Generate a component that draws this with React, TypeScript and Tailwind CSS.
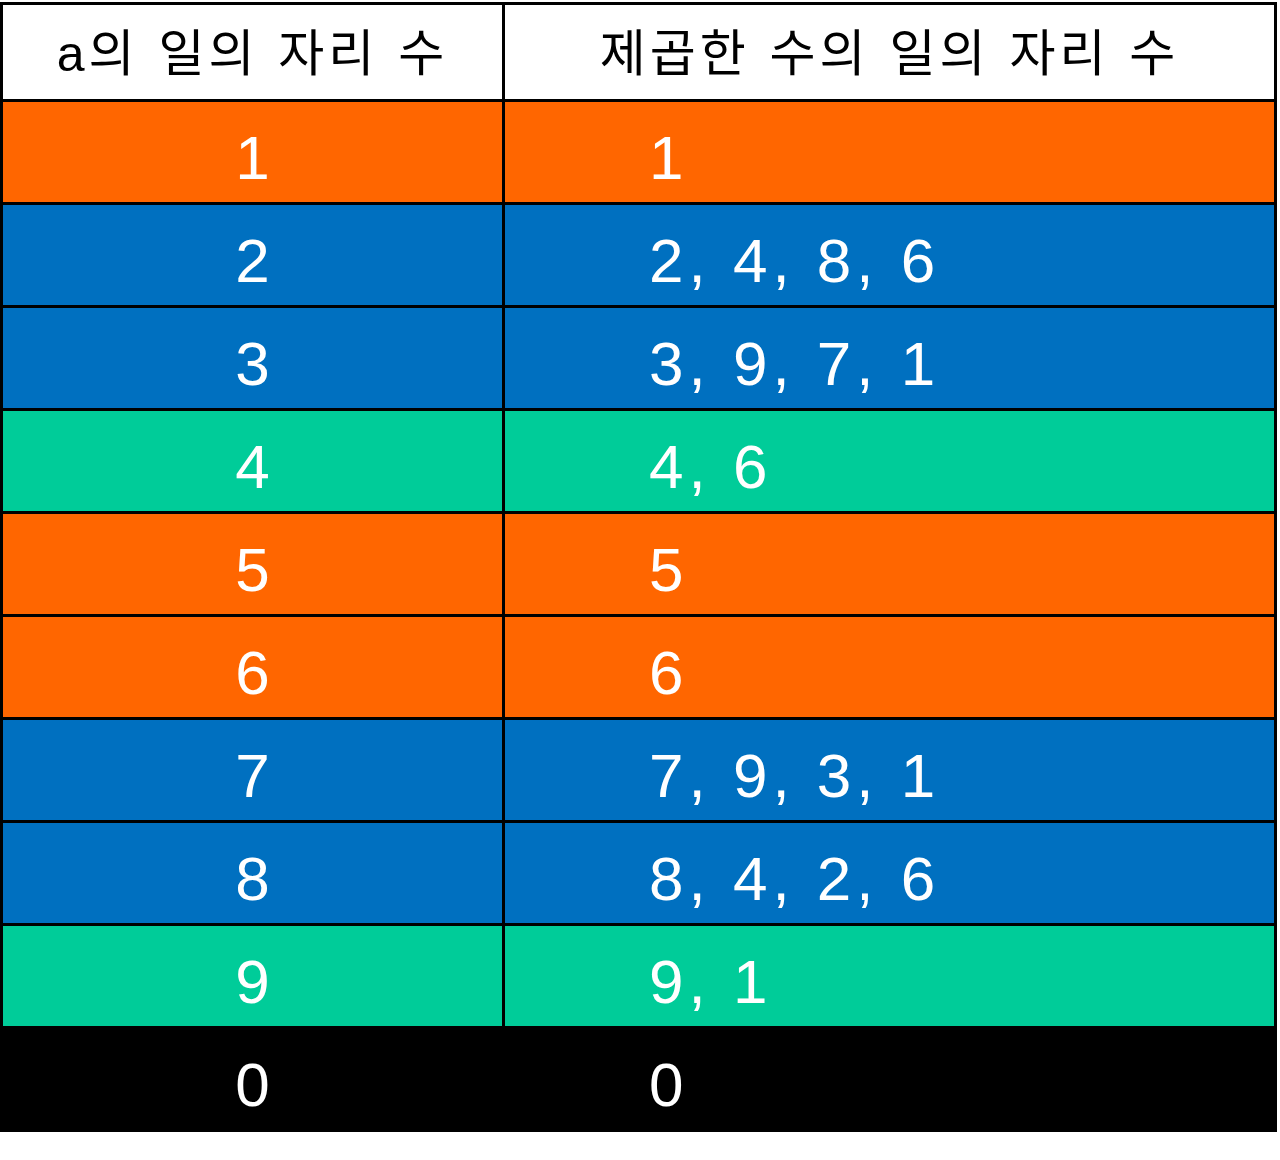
const rows: { a: string; units: string; color: string }[] = [
  { a: '1', units: '1', color: 'bg-[#ff6600]' },
  { a: '2', units: '2, 4, 8, 6', color: 'bg-[#0070c0]' },
  { a: '3', units: '3, 9, 7, 1', color: 'bg-[#0070c0]' },
  { a: '4', units: '4, 6', color: 'bg-[#00cc99]' },
  { a: '5', units: '5', color: 'bg-[#ff6600]' },
  { a: '6', units: '6', color: 'bg-[#ff6600]' },
  { a: '7', units: '7, 9, 3, 1', color: 'bg-[#0070c0]' },
  { a: '8', units: '8, 4, 2, 6', color: 'bg-[#0070c0]' },
  { a: '9', units: '9, 1', color: 'bg-[#00cc99]' },
  { a: '0', units: '0', color: 'bg-black' },
];

export default function App() {
  return (
    <div className="w-[1280px] h-[1160px] bg-white pt-[2px]">
      <div className="w-[1277px] bg-black p-[3px] grid grid-cols-[499px_769px] gap-[3px] auto-rows-[100px] grid-rows-[94px]">
        <div className="bg-white flex items-center justify-center pt-[4px] text-[50px] tracking-[4px] [word-spacing:2px] text-black [font-family:'Liberation_Sans','Noto_Sans_CJK_KR',sans-serif]">
          a의 일의 자리 수
        </div>
        <div className="bg-white flex items-center justify-center pt-[4px] text-[50px] tracking-[4px] [word-spacing:2px] text-black [font-family:'Liberation_Sans','Noto_Sans_CJK_KR',sans-serif]">
          제곱한 수의 일의 자리 수
        </div>
        {rows.map((r) => (
          <div key={r.a} className="contents">
            <div
              className={`${r.color} flex items-center justify-center pt-[10px] text-white text-[62px] [font-family:'Liberation_Sans',sans-serif]`}
            >
              {r.a}
            </div>
            <div
              className={`${r.color} flex items-center pl-[144px] pt-[10px] text-white text-[62px] tracking-[5px] [font-family:'Liberation_Sans',sans-serif]`}
            >
              {r.units}
            </div>
          </div>
        ))}
      </div>
    </div>
  );
}
